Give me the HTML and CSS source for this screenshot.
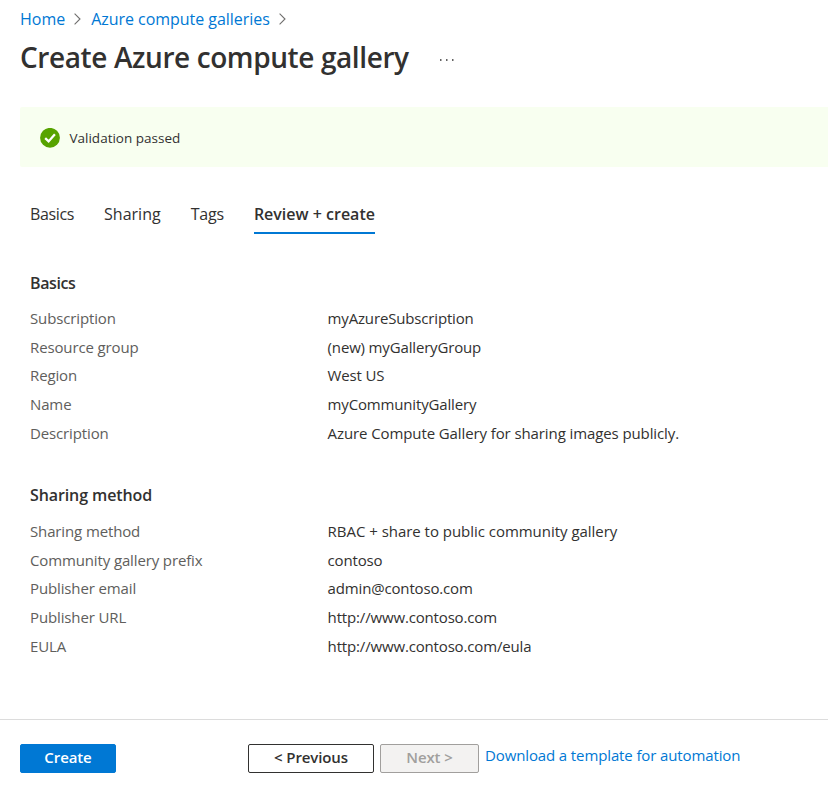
FILE: index.html
```html
<!DOCTYPE html>
<html lang="en">
<head>
<meta charset="utf-8">
<title>Create Azure compute gallery</title>
<link rel="stylesheet" href="styles.css">
</head>
<body>
<header class="header">
  <nav class="breadcrumb">
    <a class="link home" href="#">Home</a>
    <svg class="chevron" width="7" height="12" viewBox="0 0 7 12"><path d="M0.6 0.6 6 6 0.6 11.4"/></svg>
    <a class="link galleries" href="#">Azure compute galleries</a>
    <svg class="chevron" width="7" height="12" viewBox="0 0 7 12"><path d="M0.6 0.6 6 6 0.6 11.4"/></svg>
  </nav>
  <div class="title-row">
    <h1 class="title">Create Azure compute gallery</h1>
    <svg class="more" width="14" height="2" viewBox="0 0 14 2"><path d="M0 .2h1.5v1.5H0zM6 .2h1.5v1.5H6zM12 .2h1.5v1.5H12z"/></svg>
  </div>
</header>
<div class="banner">
  <svg class="check" width="20" height="20" viewBox="0 0 20 20"><circle cx="10" cy="9.8" r="9.9" fill="#57a300"/><path d="M5.2 10.2 8.6 13.4 14.9 6.2" fill="none" stroke="#fff" stroke-width="2.3"/></svg>
  <span>Validation passed</span>
</div>
<nav class="tabs">
  <a class="tab basics">Basics</a>
  <a class="tab sharing">Sharing</a>
  <a class="tab tags">Tags</a>
  <a class="tab active">Review + create</a>
</nav>
<main class="content">
  <section class="section">
    <h2 class="heading compact">Basics</h2>
    <dl class="details">
      <dt>Subscription</dt><dd>myAzureSubscription</dd>
      <dt>Resource group</dt><dd>(new) myGalleryGroup</dd>
      <dt>Region</dt><dd>West US</dd>
      <dt>Name</dt><dd>myCommunityGallery</dd>
      <dt>Description</dt><dd class="sentence">Azure Compute Gallery for sharing images publicly.</dd>
    </dl>
  </section>
  <section class="section">
    <h2 class="heading">Sharing method</h2>
    <dl class="details">
      <dt>Sharing method</dt><dd class="wide">RBAC + share to public community gallery</dd>
      <dt>Community gallery prefix</dt><dd>contoso</dd>
      <dt>Publisher email</dt><dd>admin@contoso.com</dd>
      <dt>Publisher URL</dt><dd>http://www.contoso.com</dd>
      <dt>EULA</dt><dd>http://www.contoso.com/eula</dd>
    </dl>
  </section>
</main>
<footer class="footer">
  <button class="button primary">Create</button>
  <button class="button previous">&lt; Previous</button>
  <button class="button next" disabled>Next &gt;</button>
  <a class="link download" href="#">Download a template for automation</a>
</footer>
</body>
</html>
```

FILE: styles.css
```css
* { box-sizing: border-box; }
body {
  margin: 0;
  height: 799px;
  display: flex;
  flex-direction: column;
  overflow: hidden;
  background: #fff;
  color: #323130;
  font: 15px/20px "Open Sans", "Noto Sans", sans-serif;
}
.link { color: #0078d4; text-decoration: none; }
.header { height: 107px; padding: 8px 20px 0; }
.breadcrumb { display: flex; align-items: center; height: 21px; font-size: 16px; }
.galleries { letter-spacing: -0.04px; }
.chevron { margin: 0 10px 0 9px; fill: none; stroke: #706f6e; stroke-width: 1.1; }
.title-row { display: flex; align-items: center; margin-top: 8px; height: 40px; }
.title { margin: 0; font-size: 28px; font-weight: 550; line-height: 40px; letter-spacing: -0.4px; white-space: nowrap; }
.more { margin: 5px 0 0 31px; fill: #323130; }
.banner {
  display: flex;
  align-items: center;
  gap: 9.5px;
  height: 60px;
  margin-left: 20px;
  padding: 2px 20px 0;
  border-radius: 2px 0 0 2px;
  background: #f8fff0;
  font-size: 13.5px;
}
.tabs { display: flex; gap: 30px; height: 30px; margin: 37px 0 0 30px; font-size: 16px; }
.tab { height: 30px; }
.basics { letter-spacing: -0.35px; }
.tags { letter-spacing: -0.2px; }
.active { font-weight: 600; letter-spacing: 0; border-bottom: 2px solid #0078d4; }
.content { padding: 38px 30px 0; }
.section { height: 212px; }
.heading { margin: 0 0 9.6px; font-size: 16px; font-weight: 600; line-height: 22px; letter-spacing: -0.1px; }
.section + .section .heading { margin-bottom: 10.6px; }
.compact { letter-spacing: -0.4px; }
.details { display: grid; grid-template-columns: 297.6px 1fr; grid-auto-rows: 28.75px; align-items: center; margin: 0; }
.details dt { color: #605e5c; letter-spacing: -0.13px; }
.details dd { margin: 0; letter-spacing: -0.16px; }
.details .sentence { letter-spacing: -0.1px; }
.details .wide { letter-spacing: -0.03px; }
.footer { display: flex; align-items: flex-start; height: 80px; margin-top: auto; padding: 24px 20px 0; border-top: 1px solid #dcdcdc; }
.button { height: 29px; padding: 0 0 3px; border: 1px solid #323130; border-radius: 2px; background: #fff; color: #323130; font: 600 15px/20px "Open Sans", sans-serif; letter-spacing: -0.1px; }
.primary { width: 96px; margin-right: 132px; border-color: #0078d4; background: #0078d4; color: #fff; }
.previous { width: 126px; }
.next { width: 99px; margin: 0 6px 0 6px; border-color: #a19f9d; background: #f3f2f1; color: #a19f9d; }
.download { margin-top: 1px; letter-spacing: -0.12px; white-space: nowrap; }
```
